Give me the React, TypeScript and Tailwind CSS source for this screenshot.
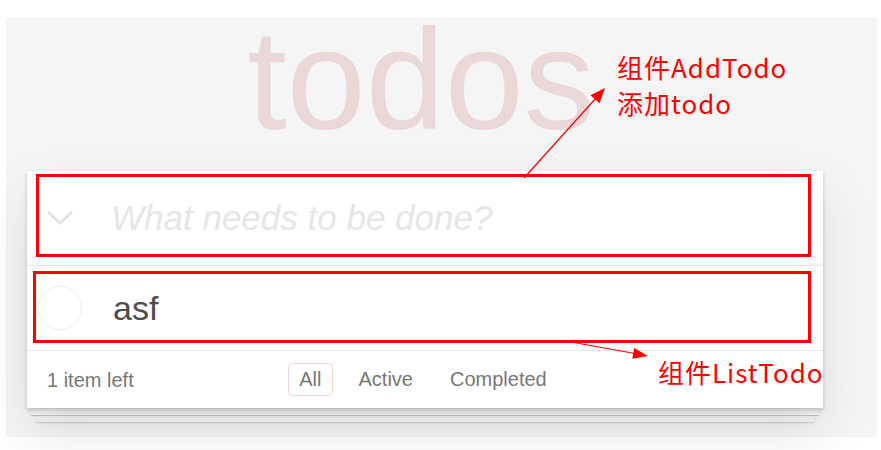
import React from 'react';

const sans = "font-['Liberation_Sans',Arial,sans-serif]";
const cjk = "font-['Noto_Sans_CJK_SC','Liberation_Sans',sans-serif]";

function Chevron() {
  return (
    <svg width="26" height="14" viewBox="0 0 26 14" className="shrink-0">
      <polyline points="1,1 13,12 25,1" fill="none" stroke="#e3e3e3" strokeWidth="3" />
    </svg>
  );
}

function FilterLink({ label, selected }: { label: string; selected?: boolean }) {
  return (
    <span
      className={`rounded-[4px] border px-[10px] py-[4px] text-[20px] leading-[23px] text-[#777] ${
        selected ? 'border-[#efd5d5]' : 'border-transparent'
      }`}
    >
      {label}
    </span>
  );
}

export default function App() {
  return (
    <div className={`relative h-[450px] w-[881px] overflow-hidden bg-white pl-[6px] pt-[18px] ${sans}`}>
      <div className="h-[419px] w-[871px] bg-[#f5f5f5]">
        <div className="ml-[21px] w-[796px]">
          <h1 className="mb-[29px] pr-[8px] text-center text-[142px] leading-[124px] font-normal text-[#ead7d7]">
            todos
          </h1>

          <section className="relative z-30 bg-white shadow-[0_2px_4px_rgba(0,0,0,0.2),0_25px_50px_rgba(0,0,0,0.1)]">
            {/* AddTodo */}
            <div className="relative flex h-[94px] items-center pl-[20px] shadow-[inset_0_-2px_1px_rgba(0,0,0,0.03)]">
              <Chevron />
              <input
                className={`ml-[38px] mt-[1px] flex-1 bg-transparent text-[35px] italic text-[#4d4d4d] outline-none placeholder:text-[#e6e6e6] ${sans}`}
                placeholder="What needs to be done?"
                readOnly
              />
              <div className="pointer-events-none absolute bottom-[8px] left-[9px] right-[12px] top-[3px] border-[3px] border-[#ff0000]" />
            </div>

            {/* ListTodo */}
            <ul className="border-t border-[#e6e6e6]">
              <li className="relative flex h-[84px] items-center pl-[11px]">
                <span className="h-[44px] w-[44px] shrink-0 rounded-full border-[1.5px] border-[#ededed]" />
                <span className="ml-[31px] text-[34px] text-[#4d4d4d]">asf</span>
                <div className="pointer-events-none absolute bottom-[7px] left-[6px] right-[12px] top-[5px] border-[3px] border-[#ff0000]" />
              </li>
            </ul>

            <footer className="grid h-[58px] grid-cols-[1fr_auto_1fr] items-center border-t border-[#e6e6e6] px-[20px]">
              <span className="text-[20px] text-[#777]">1 item left</span>
              <div className="-ml-[4px] flex items-center gap-[15px]">
                <FilterLink label="All" selected />
                <FilterLink label="Active" />
                <FilterLink label="Completed" />
              </div>
              <span />
            </footer>
          </section>
          <div className="relative z-20 mx-[4px] h-[7px] bg-[#f6f6f6] shadow-[0_1px_1px_rgba(0,0,0,0.2)]" />
          <div className="relative z-10 mx-[9px] h-[7px] bg-[#f6f6f6] shadow-[0_1px_2px_rgba(0,0,0,0.2)]" />
        </div>
      </div>

      {/* annotations */}
      <div className={`absolute left-[617px] top-[49px] z-40 text-[26px] leading-[36px] tracking-[1px] text-[#ff0000] ${cjk}`}>
        <div>组件AddTodo</div>
        <div>添加todo</div>
      </div>
      <div className={`absolute left-[658px] top-[354px] z-40 text-[26px] leading-[36px] tracking-[1px] text-[#ff0000] ${cjk}`}>
        组件ListTodo
      </div>
      <svg className="pointer-events-none absolute left-0 top-0 z-40" width="881" height="450" viewBox="0 0 881 450">
        <line x1="524" y1="178" x2="596" y2="98" stroke="#ff0000" strokeWidth="1.2" />
        <polygon points="605,88 590.5,95.2 599.5,103.2" fill="#ff0000" />
        <line x1="571" y1="342" x2="635" y2="353.5" stroke="#ff0000" strokeWidth="1.2" />
        <polygon points="648,356 632.3,358.7 634.3,347.9" fill="#ff0000" />
      </svg>
    </div>
  );
}
